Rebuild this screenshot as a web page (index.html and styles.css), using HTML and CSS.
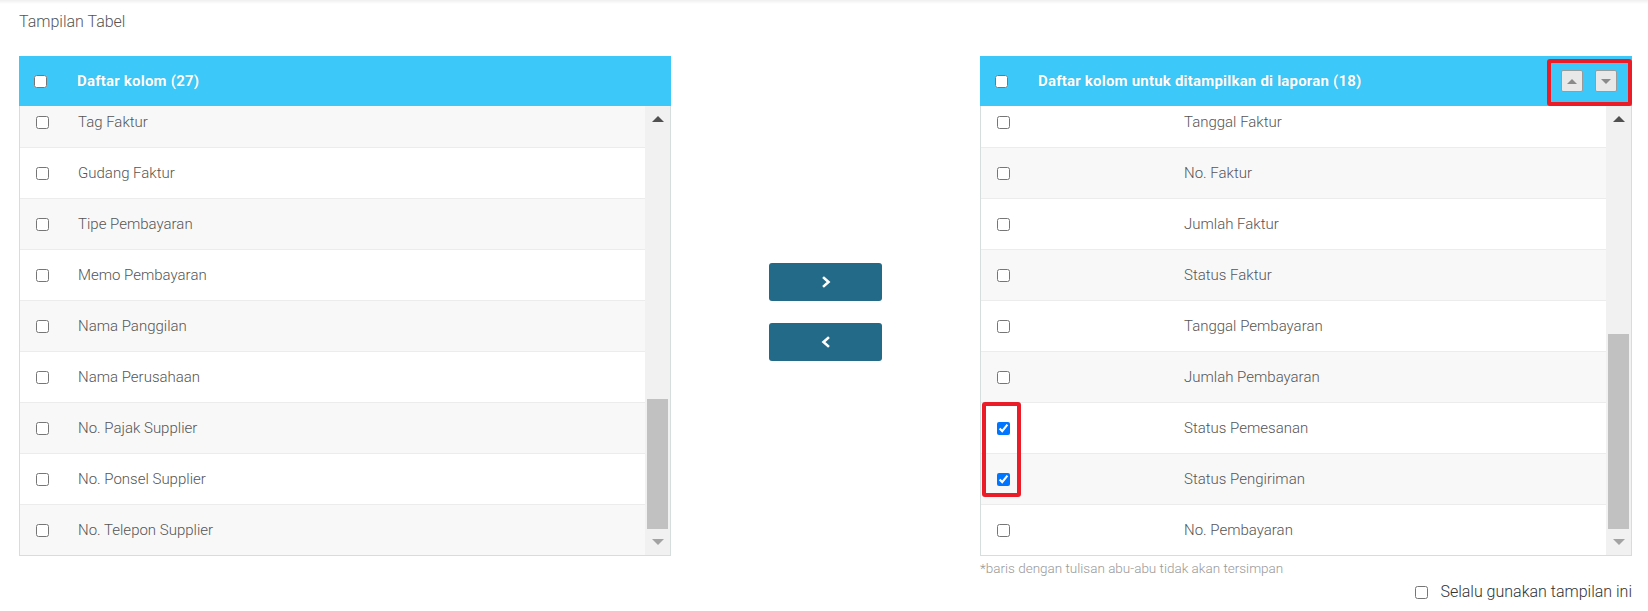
FILE: index.html
```html
<!DOCTYPE html>
<html lang="id">
<head>
    <meta charset="UTF-8">
    <meta name="viewport" content="width=device-width, initial-scale=1.0">
    <title>Tampilan Tabel</title>
    <link rel="stylesheet" href="styles.css">
</head>
<body>
    <div class="top-shade"></div>
    <div class="page">
        <h2 class="title">Tampilan Tabel</h2>

        <div class="columns">
            <!-- available columns -->
            <div class="panel">
                <div class="panel-head">
                    <span class="cell-check"><input type="checkbox"></span>
                    <span class="head-label">Daftar kolom (27)</span>
                </div>
                <div class="panel-body">
                    <div class="rows">
                        <div class="rows-inner">
                            <div class="row alt"><span class="cell-check"><input type="checkbox"></span><span class="cell-name">Tag Faktur</span></div>
                            <div class="row"><span class="cell-check"><input type="checkbox"></span><span class="cell-name">Gudang Faktur</span></div>
                            <div class="row alt"><span class="cell-check"><input type="checkbox"></span><span class="cell-name">Tipe Pembayaran</span></div>
                            <div class="row"><span class="cell-check"><input type="checkbox"></span><span class="cell-name">Memo Pembayaran</span></div>
                            <div class="row alt"><span class="cell-check"><input type="checkbox"></span><span class="cell-name">Nama Panggilan</span></div>
                            <div class="row"><span class="cell-check"><input type="checkbox"></span><span class="cell-name">Nama Perusahaan</span></div>
                            <div class="row alt"><span class="cell-check"><input type="checkbox"></span><span class="cell-name">No. Pajak Supplier</span></div>
                            <div class="row"><span class="cell-check"><input type="checkbox"></span><span class="cell-name">No. Ponsel Supplier</span></div>
                            <div class="row alt"><span class="cell-check"><input type="checkbox"></span><span class="cell-name">No. Telepon Supplier</span></div>
                        </div>
                    </div>
                    <div class="scrollbar">
                        <div class="sb-btn"><span class="tri-up"></span></div>
                        <div class="sb-track"><div class="sb-thumb" style="top: 267px; height: 130px;"></div></div>
                        <div class="sb-btn"><span class="tri-down"></span></div>
                    </div>
                </div>
            </div>

            <!-- move buttons -->
            <div class="mover">
                <button class="move-btn" type="button">
                    <svg width="12" height="12" viewBox="0 0 12 12"><polyline points="4,2 8.5,6 4,10" fill="none" stroke="#fff" stroke-width="2.6" stroke-linecap="square"/></svg>
                </button>
                <button class="move-btn" type="button">
                    <svg width="12" height="12" viewBox="0 0 12 12"><polyline points="8,2 3.5,6 8,10" fill="none" stroke="#fff" stroke-width="2.6" stroke-linecap="square"/></svg>
                </button>
            </div>

            <!-- shown columns -->
            <div class="right-col">
                <div class="panel">
                    <div class="panel-head">
                        <span class="cell-check"><input type="checkbox"></span>
                        <span class="head-label">Daftar kolom untuk ditampilkan di laporan (18)</span>
                        <div class="order-btns">
                            <button class="order-btn" type="button"><span class="tri-up small"></span></button>
                            <button class="order-btn" type="button"><span class="tri-down small"></span></button>
                        </div>
                        <div class="mark mark-order"></div>
                    </div>
                    <div class="panel-body">
                        <div class="rows shown">
                            <div class="rows-inner">
                                <div class="row"><span class="cell-check"><input type="checkbox"></span><span class="cell-name">Tanggal Faktur</span></div>
                                <div class="row alt"><span class="cell-check"><input type="checkbox"></span><span class="cell-name">No. Faktur</span></div>
                                <div class="row"><span class="cell-check"><input type="checkbox"></span><span class="cell-name">Jumlah Faktur</span></div>
                                <div class="row alt"><span class="cell-check"><input type="checkbox"></span><span class="cell-name">Status Faktur</span></div>
                                <div class="row"><span class="cell-check"><input type="checkbox"></span><span class="cell-name">Tanggal Pembayaran</span></div>
                                <div class="row alt"><span class="cell-check"><input type="checkbox"></span><span class="cell-name">Jumlah Pembayaran</span></div>
                                <div class="row"><span class="cell-check"><input type="checkbox" checked></span><span class="cell-name">Status Pemesanan</span></div>
                                <div class="row alt"><span class="cell-check"><input type="checkbox" checked></span><span class="cell-name">Status Pengiriman</span></div>
                                <div class="row"><span class="cell-check"><input type="checkbox"></span><span class="cell-name">No. Pembayaran</span></div>
                            </div>
                        </div>
                        <div class="scrollbar">
                            <div class="sb-btn"><span class="tri-up"></span></div>
                            <div class="sb-track"><div class="sb-thumb" style="top: 202px; height: 195px;"></div></div>
                            <div class="sb-btn"><span class="tri-down"></span></div>
                        </div>
                    </div>
                    <div class="mark mark-checked"></div>
                </div>
                <p class="note">*baris dengan tulisan abu-abu tidak akan tersimpan</p>
                <label class="always"><input type="checkbox"> Selalu gunakan tampilan ini</label>
            </div>
        </div>
    </div>
</body>
</html>
```

FILE: styles.css
```css
body {
    margin: 0;
    font-family: Roboto, "Liberation Sans", sans-serif;
    color: #555;
    background: #fff;
}

.top-shade {
    height: 4px;
    background: linear-gradient(#efefef, #fff);
}

.page {
    padding: 0 16px 0 19px;
}

.title {
    margin: 8px 0 24px;
    font-size: 16px;
    line-height: 20px;
    font-weight: 300;
    color: #555;
}

.columns {
    display: grid;
    grid-template-columns: 652px 1fr 652px;
}

.panel {
    position: relative;
}

.panel-head {
    position: relative;
    height: 50px;
    display: flex;
    align-items: center;
    background: #3cc8f8;
}

.cell-check {
    width: 58px;
    padding-left: 16px;
    box-sizing: border-box;
    display: flex;
    align-items: center;
    flex-shrink: 0;
}

.panel-head .cell-check {
    padding-left: 15px;
}

input[type="checkbox"] {
    width: 13px;
    height: 13px;
    margin: 0;
}

.head-label {
    color: #fff;
    font-size: 15px;
    font-weight: 700;
    letter-spacing: 0.2px;
    text-shadow: 0 0 1px rgba(0, 0, 0, 0.15);
}

.panel-body {
    height: 449px;
    display: flex;
    border: 1px solid #d5dddd;
    border-top: none;
}

.rows {
    flex: 1;
    overflow: hidden;
}

.rows-inner {
    margin-top: -9px;
}

.row {
    height: 50px;
    border-bottom: 1px solid #ececec;
    display: flex;
    align-items: center;
    background: #fff;
}

.row.alt {
    background: #f8f8f8;
}

.cell-name {
    font-size: 15px;
    font-weight: 300;
    color: #555;
}

.shown .cell-name {
    padding-left: 145px;
}

/* scrollbar */
.scrollbar {
    width: 25px;
    display: flex;
    flex-direction: column;
    background: #f1f1f1;
}

.sb-btn {
    height: 26px;
    display: flex;
    align-items: center;
    justify-content: center;
}

.sb-track {
    flex: 1;
    position: relative;
}

.sb-thumb {
    position: absolute;
    left: 2px;
    right: 2px;
    background: #c1c1c1;
}

.tri-up,
.tri-down {
    width: 0;
    height: 0;
    border-left: 6px solid transparent;
    border-right: 6px solid transparent;
}

.tri-up {
    border-bottom: 6px solid #505050;
}

.tri-down {
    border-top: 6px solid #a3a3a3;
}

.tri-up.small,
.tri-down.small {
    border-left-width: 5px;
    border-right-width: 5px;
}

.tri-up.small {
    border-bottom: 5px solid #8a8a8a;
}

.tri-down.small {
    border-top: 5px solid #8a8a8a;
}

/* middle */
.mover {
    display: flex;
    flex-direction: column;
    align-items: center;
    gap: 22px;
    padding-top: 207px;
}

.move-btn {
    width: 113px;
    height: 38px;
    border: none;
    border-radius: 3px;
    background: #226a87;
    display: flex;
    align-items: center;
    justify-content: center;
    padding: 0;
}

.order-btns {
    margin-left: auto;
    margin-right: 15px;
    display: flex;
    gap: 12px;
}

.order-btn {
    width: 22px;
    height: 22px;
    padding: 0;
    border: 1px solid #9a9a9a;
    border-radius: 2px;
    background: #e8e8e8;
    display: flex;
    align-items: center;
    justify-content: center;
}

/* highlight marks */
.mark {
    position: absolute;
    border: 4px solid #ea1c27;
    border-radius: 3px;
    box-sizing: border-box;
}

.mark-order {
    left: 567px;
    top: 3px;
    width: 85px;
    height: 47px;
}

.mark-checked {
    left: 2px;
    top: 346px;
    width: 39px;
    height: 95px;
}

.note {
    margin: 4px 0 0;
    font-size: 13.5px;
    line-height: 16px;
    font-weight: 300;
    color: #999;
}

.always {
    margin-top: 6px;
    display: flex;
    align-items: center;
    justify-content: flex-end;
    gap: 12px;
    font-size: 16px;
    line-height: 20px;
    font-weight: 300;
    color: #333;
}
```
